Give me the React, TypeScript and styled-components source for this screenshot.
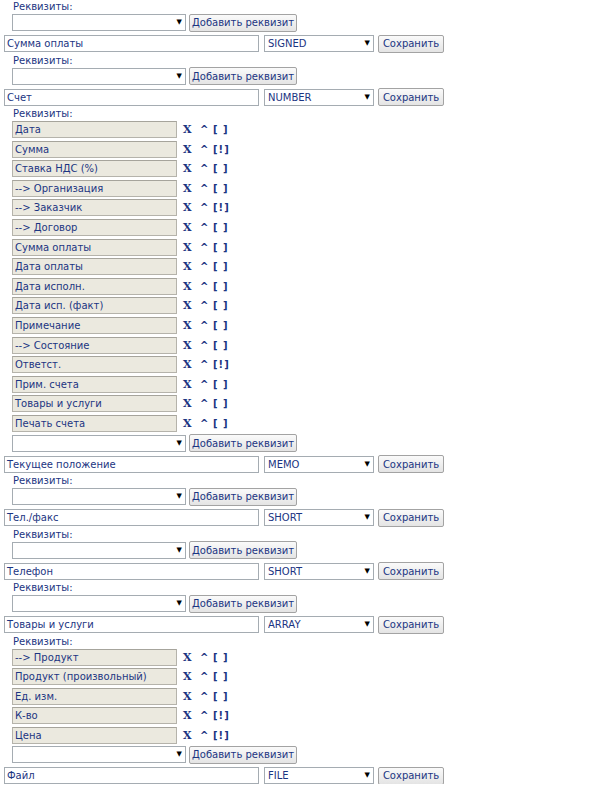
import React from "react";
import styled, { createGlobalStyle } from "styled-components";

const Global = createGlobalStyle`
  html, body { margin: 0; padding: 0; background: #ffffff; }
  body { font-family: "DejaVu Sans", Verdana, sans-serif; font-size: 10px; color: #1b3582; }
`;

const Page = styled.div`
  padding: 0 0 0 4px;
  width: 586px;
`;

const Sub = styled.div<{ $first?: boolean }>`
  display: flex;
  flex-direction: column;
  padding-left: 8px;
  margin-top: ${(p) => (p.$first ? "0" : "1.5px")};
`;

const Label = styled.div`
  height: 14px;
  line-height: 14px;
  padding-left: 1px;
  color: #1b3582;
`;

const List = styled.div`
  display: flex;
  flex-direction: column;
  gap: 2.6px;
`;

const Line = styled.div`
  display: flex;
  align-items: center;
  height: 17px;
`;

const AttrBox = styled.div`
  box-sizing: border-box;
  width: 165px;
  height: 17px;
  line-height: 15px;
  padding-left: 2px;
  background: #ebe9df;
  border: 1px solid #b5b3ab;
  border-top-color: #a6a49c;
  color: #1b3582;
  white-space: nowrap;
  overflow: hidden;
`;

const Controls = styled.div`
  display: flex;
  align-items: center;
  margin-left: 6px;
  font-weight: bold;
  color: #1b3582;
  font-size: 10px;
`;

const Ctl = styled.span<{ $w: number }>`
  display: inline-block;
  width: ${(p) => p.$w}px;
`;

const Cross = styled(Ctl)`
  font-size: 11px;
  font-family: "DejaVu Serif", "Liberation Serif", serif;
`;

const Flag = styled.span`
  letter-spacing: 1px;
`;

const SelectBox = styled.div<{ $w: number }>`
  box-sizing: border-box;
  width: ${(p) => p.$w}px;
  height: 17px;
  border: 1px solid #a5acb2;
  background: #ffffff;
  display: flex;
  align-items: center;
  padding: 0 3px 0 3px;
  color: #1b3582;
`;

const SelectText = styled.span`
  flex: 1;
  white-space: nowrap;
  overflow: hidden;
`;

const Arrow = styled.span`
  font-size: 7px;
  color: #000000;
  line-height: 1;
`;

const Button = styled.button<{ $w: number; $ml: number }>`
  box-sizing: border-box;
  width: ${(p) => p.$w}px;
  height: 18px;
  margin-left: ${(p) => p.$ml}px;
  padding: 0;
  font-family: "DejaVu Sans", Verdana, sans-serif;
  font-size: 10px;
  color: #1b3582;
  background: linear-gradient(#fafafa, #e4e4e4);
  border: 1px solid #a3a3a3;
  border-radius: 2px;
  line-height: 15px;
`;

const MainRow = styled.div`
  display: flex;
  align-items: center;
  height: 17px;
  margin-top: 4px;
`;

const NameInput = styled.div`
  box-sizing: border-box;
  width: 255px;
  height: 17px;
  line-height: 15px;
  border: 1px solid #a5acb2;
  padding-left: 2px;
  color: #1b3582;
  background: #fff;
`;

const Gap = styled.span<{ $w: number }>`
  display: inline-block;
  width: ${(p) => p.$w}px;
`;

type Attr = { name: string; req?: boolean };
type Block = { attrs: Attr[]; name: string; type: string };

const blocks: Block[] = [
  { attrs: [], name: "Сумма оплаты", type: "SIGNED" },
  { attrs: [], name: "Счет", type: "NUMBER" },
  {
    attrs: [
      { name: "Дата" },
      { name: "Сумма", req: true },
      { name: "Ставка НДС (%)" },
      { name: "--> Организация" },
      { name: "--> Заказчик", req: true },
      { name: "--> Договор" },
      { name: "Сумма оплаты" },
      { name: "Дата оплаты" },
      { name: "Дата исполн." },
      { name: "Дата исп. (факт)" },
      { name: "Примечание" },
      { name: "--> Состояние" },
      { name: "Ответст.", req: true },
      { name: "Прим. счета" },
      { name: "Товары и услуги" },
      { name: "Печать счета" },
    ],
    name: "Текущее положение",
    type: "MEMO",
  },
  { attrs: [], name: "Тел./факс", type: "SHORT" },
  { attrs: [], name: "Телефон", type: "SHORT" },
  { attrs: [], name: "Товары и услуги", type: "ARRAY" },
  {
    attrs: [
      { name: "--> Продукт" },
      { name: "Продукт (произвольный)" },
      { name: "Ед. изм." },
      { name: "К-во", req: true },
      { name: "Цена", req: true },
    ],
    name: "Файл",
    type: "FILE",
  },
];

function Select({ w, value }: { w: number; value: string }) {
  return (
    <SelectBox $w={w}>
      <SelectText>{value}</SelectText>
      <Arrow>▼</Arrow>
    </SelectBox>
  );
}

export default function App() {
  return (
    <>
      <Global />
      <Page>
        {blocks.map((b, i) => (
          <React.Fragment key={i}>
            <Sub $first={i === 0}>
              <Label>Реквизиты:</Label>
              <List>
                {b.attrs.map((a, j) => (
                  <Line key={j}>
                    <AttrBox>{a.name}</AttrBox>
                    <Controls>
                      <Cross $w={17}>X</Cross>
                      <Ctl $w={13}>^</Ctl>
                      <Flag>{a.req ? "[!]" : "[ ]"}</Flag>
                    </Controls>
                  </Line>
                ))}
                <Line>
                  <Select w={174} value="" />
                  <Button $w={108} $ml={3}>Добавить реквизит</Button>
                </Line>
              </List>
            </Sub>
            <MainRow>
              <NameInput>{b.name}</NameInput>
              <Gap $w={5} />
              <Select w={110} value={b.type} />
              <Button $w={66} $ml={4}>Сохранить</Button>
            </MainRow>
          </React.Fragment>
        ))}
      </Page>
    </>
  );
}
